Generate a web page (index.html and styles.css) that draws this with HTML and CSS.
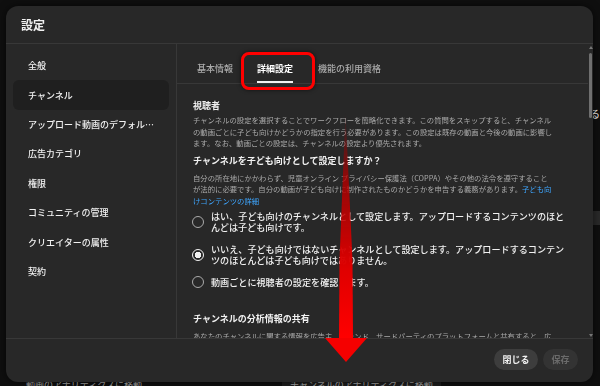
FILE: index.html
```html
<!DOCTYPE html>
<html lang="ja">
<head>
  <meta charset="UTF-8" />
  <title>設定</title>
  <link rel="stylesheet" href="styles.css">
</head>
<body>
  <!-- page behind the dialog -->
  <div class="page">
    <div class="page-main">
      <div class="page-links">
        <span class="page-link">動画のアナリティクスに移動</span>
        <span class="page-link boxed">チャンネルのアナリティクスに移動</span>
      </div>
    </div>
    <div class="page-side">
      <div class="side-title">挑戦</div>
      <div class="side-text">やってみる</div>
      <div class="side-dim">かんたん</div>
      <div class="side-dim">子ども</div>
      <div class="side-dim">でも</div>
      <div class="side-box">評価</div>
    </div>
  </div>

  <div class="dialog">
    <div class="dialog-header">設定</div>

    <div class="dialog-body">
      <nav class="nav">
        <div class="nav-item">全般</div>
        <div class="nav-item active">チャンネル</div>
        <div class="nav-item">アップロード動画のデフォル…</div>
        <div class="nav-item">広告カテゴリ</div>
        <div class="nav-item">権限</div>
        <div class="nav-item">コミュニティの管理</div>
        <div class="nav-item">クリエイターの属性</div>
        <div class="nav-item">契約</div>
      </nav>

      <div class="content">
        <div class="content-main">
          <div class="tabs">
            <div class="tab">基本情報</div>
            <div class="tab active">詳細設定</div>
            <div class="tab">機能の利用資格</div>
          </div>

          <div class="scroll">
            <div class="section-title">視聴者</div>
            <p class="desc">チャンネルの設定を選択することでワークフローを簡略化できます。この質問をスキップすると、チャンネル<br>の動画ごとに子ども向けかどうかの指定を行う必要があります。この設定は既存の動画と今後の動画に影響し<br>ます。なお、動画ごとの設定は、チャンネルの設定より優先されます。</p>

            <div class="question">チャンネルを子ども向けとして設定しますか？</div>
            <p class="desc desc-q">自分の所在地にかかわらず、児童オンライン プライバシー保護法（COPPA）やその他の法令を遵守すること<br>が法的に必要です。自分の動画が子ども向けに制作されたものかどうかを申告する義務があります。<span class="link">子ども向<br>けコンテンツの詳細</span></p>

            <div class="radio-list">
              <div class="radio-row">
                <span class="radio"></span>
                <span class="radio-label">はい、子ども向けのチャンネルとして設定します。アップロードするコンテンツのほと<br>んどは子ども向けです。</span>
              </div>
              <div class="radio-row">
                <span class="radio checked"></span>
                <span class="radio-label">いいえ、子ども向けではないチャンネルとして設定します。アップロードするコンテン<br>ツのほとんどは子ども向けではありません。</span>
              </div>
              <div class="radio-row">
                <span class="radio"></span>
                <span class="radio-label">動画ごとに視聴者の設定を確認します。</span>
              </div>
            </div>

            <div class="section-title share">チャンネルの分析情報の共有</div>
            <p class="desc desc-share">あなたのチャンネルに関する情報を広告主、ブランド、サードパーティのプラットフォームと共有すると、広<br>告主があなたのチャンネルを見つけやすくなります。</p>
          </div>
        </div>

        <div class="scrollbar">
          <span class="sb-up"></span>
          <span class="sb-thumb"></span>
          <span class="sb-fill"></span>
          <span class="sb-down"></span>
        </div>
      </div>
    </div>

    <div class="dialog-footer">
      <button class="btn">閉じる</button>
      <button class="btn disabled">保存</button>
    </div>
  </div>

  <!-- annotation: red frame on the tab + big arrow -->
  <div class="mark"></div>
  <svg class="arrow" width="600" height="386" viewBox="0 0 600 386">
    <defs>
      <linearGradient id="shaft" x1="0" y1="112" x2="0" y2="338" gradientUnits="userSpaceOnUse">
        <stop offset="0" stop-color="#a00000" stop-opacity="0"/>
        <stop offset="0.3" stop-color="#b00000" stop-opacity="0.8"/>
        <stop offset="0.7" stop-color="#e00000"/>
        <stop offset="1" stop-color="#ff0000"/>
      </linearGradient>
    </defs>
    <polygon points="345.5,112 352.5,260 353,338 339,338 339.5,260" fill="url(#shaft)"/>
    <polygon points="325,338 367,338 346,362" fill="#f50000"/>
  </svg>
</body>
</html>
```

FILE: styles.css
```css
* {
  box-sizing: border-box;
}

body {
  margin: 0;
  width: 600px;
  height: 386px;
  overflow: hidden;
  background: #0f0f0f;
  color: #f1f1f1;
  font-family: 'Noto Sans CJK JP', 'Noto Sans', sans-serif;
}

/* page behind */
.page {
  display: flex;
  height: 386px;
}

.page-main {
  width: 592px;
  padding-top: 378px;
}

.page-links {
  display: flex;
  align-items: flex-start;
  padding-left: 26px;
}

.page-link {
  font-size: 9px;
  line-height: 14px;
  color: #aaa;
  white-space: nowrap;
}

.page-link.boxed {
  background: #1e1e1e;
  padding: 0 8px;
  margin-left: 140px;
}

.page-side {
  padding-top: 76px;
  padding-left: 3px;
  white-space: nowrap;
}

.side-title {
  font-size: 12px;
  font-weight: bold;
  line-height: 14px;
}

.side-text {
  font-size: 10px;
  margin-top: 18px;
  line-height: 12px;
}

.side-dim {
  font-size: 8px;
  line-height: 11px;
  color: #666;
}

.side-box {
  margin-top: 58px;
  font-size: 9px;
  line-height: 14px;
  background: #2a2a2a;
  color: #aaa;
}

/* dialog */
.dialog {
  position: fixed;
  left: 6px;
  top: 6px;
  width: 587px;
  height: 376px;
  background: #282828;
  border-radius: 12px;
  display: flex;
  flex-direction: column;
  overflow: hidden;
  box-shadow: 0 0 8px rgba(0, 0, 0, 0.6);
}

.dialog-header {
  height: 38px;
  flex: none;
  display: flex;
  align-items: center;
  padding-left: 15px;
  font-size: 12px;
  font-weight: bold;
  border-bottom: 1px solid #383838;
}

.dialog-body {
  flex: 1;
  display: flex;
  min-height: 0;
}

.nav {
  width: 171px;
  flex: none;
  padding: 7px 7px 0;
  border-right: 1px solid #383838;
}

.nav-item {
  height: 29.4px;
  display: flex;
  align-items: center;
  padding-left: 15px;
  font-size: 9px;
  font-weight: 500;
  border-radius: 6px;
  white-space: nowrap;
}

.nav-item.active {
  background: #1f1f1f;
}

.content {
  flex: 1;
  display: flex;
  min-width: 0;
}

.content-main {
  flex: 1;
  display: flex;
  flex-direction: column;
  min-width: 0;
}

.tabs {
  height: 40px;
  flex: none;
  display: flex;
  padding-left: 8px;
  border-bottom: 1px solid #383838;
}

.tab {
  padding: 19px 12px 0;
  font-size: 9px;
  line-height: 12px;
  color: #aaa;
  font-weight: 500;
}

.tab.active {
  color: #fff;
  font-weight: bold;
  padding: 19px 0 0;
  margin: 0 13px 0 12px;
  border-bottom: 2px solid #f1f1f1;
}

.scroll {
  flex: 1;
  overflow: hidden;
  padding: 16px 0 0 16px;
}

.section-title, .question {
  font-size: 9px;
  line-height: 12px;
  font-weight: bold;
}

.desc {
  margin: 2px 0 0;
  width: 385px;
  font-size: 7.35px;
  line-height: 11.5px;
  color: #aaa;
  white-space: nowrap;
}

.question {
  margin-top: 6px;
}

.desc-q {
  margin-top: 5px;
}

.link {
  color: #3ea6ff;
}

.radio-list {
  margin-top: 5px;
  display: flex;
  flex-direction: column;
  gap: 10.5px;
}

.radio-row {
  display: flex;
  align-items: center;
  gap: 7px;
  margin-left: -1px;
}

.radio {
  width: 12px;
  height: 12px;
  flex: none;
  border: 1.5px solid #aaa;
  border-radius: 50%;
}

.radio.checked {
  border-color: #f1f1f1;
  background: radial-gradient(circle, #f1f1f1 0 3px, transparent 3.5px);
}

.radio-label {
  font-size: 9.1px;
  line-height: 11px;
  font-weight: 500;
  white-space: nowrap;
}

.share {
  margin-top: 24.5px;
}

.desc-share {
  margin-top: 5px;
}

.scrollbar {
  width: 5px;
  flex: none;
  display: flex;
  flex-direction: column;
  align-items: center;
  padding: 2px 0 1px;
}

.sb-up, .sb-down {
  width: 0;
  height: 0;
  border-left: 2px solid transparent;
  border-right: 2px solid transparent;
}

.sb-up {
  border-bottom: 3px solid #777;
}

.sb-down {
  border-top: 3px solid #777;
}

.sb-thumb {
  margin-top: 4px;
  width: 3px;
  height: 65px;
  border-radius: 2px;
  background: #6f6f6f;
}

.sb-fill {
  flex: 1;
}

.dialog-footer {
  height: 44px;
  flex: none;
  display: flex;
  align-items: center;
  justify-content: flex-end;
  gap: 5px;
  padding: 0 15px 3px;
  border-top: 1px solid #383838;
}

.btn {
  height: 21px;
  padding: 0 8.5px;
  border: none;
  border-radius: 11px;
  background: #3d3d3d;
  color: #f1f1f1;
  font-family: inherit;
  font-size: 9px;
  font-weight: bold;
}

.btn.disabled {
  background: #333;
  color: #6a6a6a;
}

/* annotation overlay */
.mark {
  position: absolute;
  left: 241px;
  top: 52px;
  width: 74px;
  height: 38px;
  border: 3px solid #ff0000;
  border-radius: 8px;
  box-shadow: 0 0 4px rgba(0, 0, 0, 0.6);
}

.arrow {
  position: absolute;
  left: 0;
  top: 0;
  pointer-events: none;
}
```
